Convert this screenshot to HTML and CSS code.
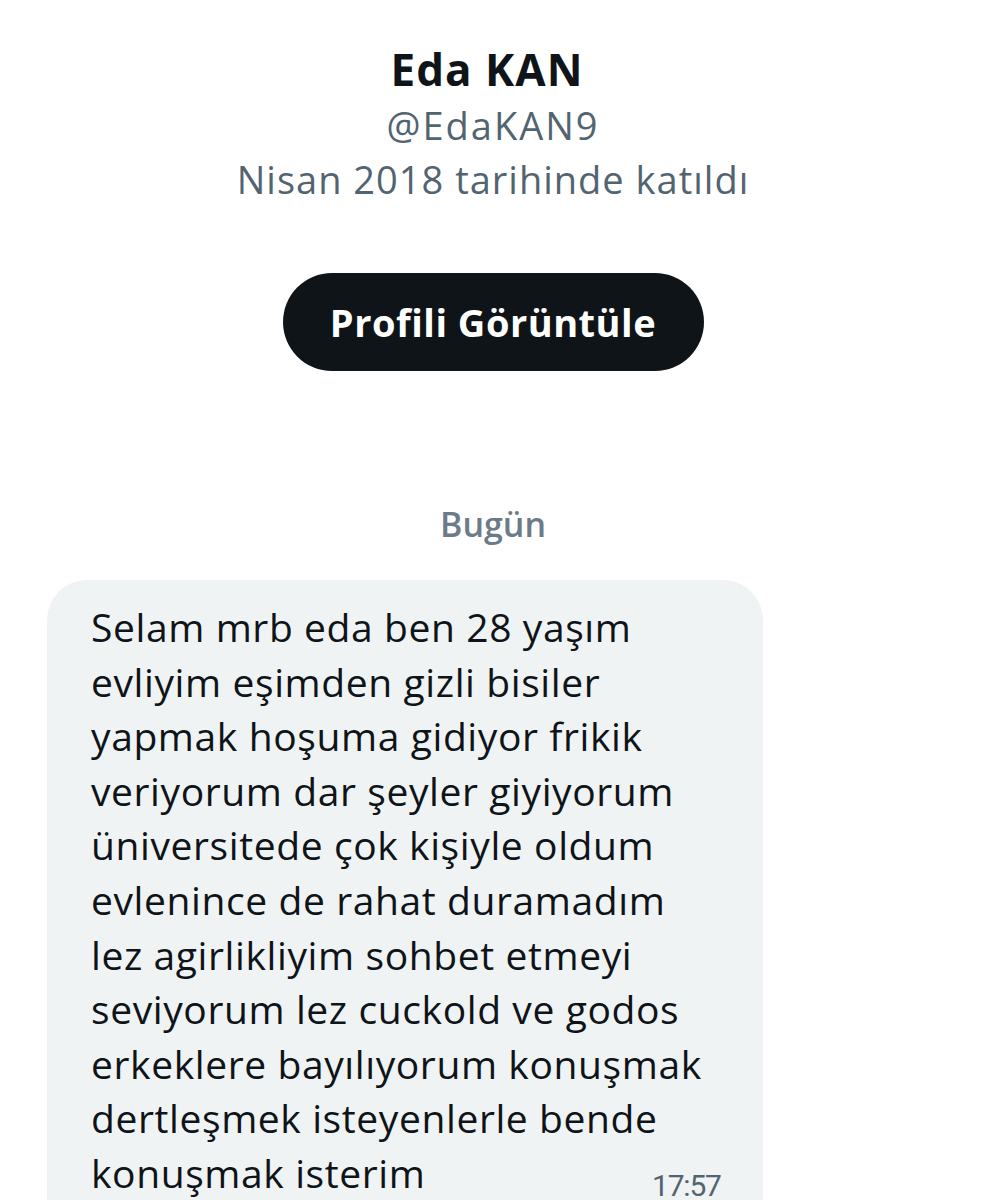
FILE: index.html
```html
<!DOCTYPE html>
<html lang="tr">
<head>
<meta charset="utf-8">
<link rel="stylesheet" href="styles.css">
</head>
<body>
<main class="page">
  <section class="profile">
    <h1 class="name">Eda KAN</h1>
    <div class="handle">@EdaKAN9</div>
    <div class="joined">Nisan 2018 tarihinde katıldı</div>
    <button class="view-btn">Profili Görüntüle</button>
  </section>
  <div class="day">Bugün</div>
  <div class="bubble">
    <p class="msg">Selam mrb eda ben 28 yaşım<br>evliyim eşimden gizli bisiler<br>yapmak hoşuma gidiyor frikik<br>veriyorum dar şeyler giyiyorum<br>üniversitede çok kişiyle oldum<br>evlenince de rahat duramadım<br>lez agirlikliyim sohbet etmeyi<br>seviyorum lez cuckold ve godos<br>erkeklere bayılıyorum konuşmak<br>dertleşmek isteyenlerle bende<br>konuşmak isterim</p>
    <span class="time">17:57</span>
  </div>
</main>
</body>
</html>
```
FILE: styles.css
```css
html, body {
  margin: 0;
  padding: 0;
  background: #ffffff;
}
.page {
  width: 986px;
  height: 1200px;
  overflow: hidden;
  font-family: "Open Sans", "Liberation Sans", sans-serif;
}
.profile {
  display: flex;
  flex-direction: column;
  align-items: center;
  padding-top: 40px;
}
.name {
  margin: 0 12px 0 0;
  font-size: 44px;
  line-height: 58px;
  font-weight: 700;
  letter-spacing: 1px;
  color: #0f1419;
}
.handle {
  font-size: 38px;
  line-height: 54px;
  letter-spacing: 2px;
  color: #536471;
}
.joined {
  font-size: 38px;
  line-height: 54px;
  letter-spacing: 1px;
  color: #536471;
}
.view-btn {
  margin-top: 67px;
  width: 421px;
  height: 98px;
  padding: 0;
  border: none;
  border-radius: 49px;
  background: #0f1419;
  color: #ffffff;
  font-family: "Open Sans", "Liberation Sans", sans-serif;
  font-size: 38px;
  font-weight: 700;
  letter-spacing: 0.5px;
}
.day {
  margin-top: 131px;
  text-align: center;
  font-weight: 600;
  font-size: 34px;
  line-height: 44px;
  color: #6b7b88;
}
.bubble {
  margin: 34px 0 0 47px;
  width: 716px;
  height: 700px;
  background: #eff3f4;
  border-radius: 40px;
  box-sizing: border-box;
  padding: 20px 44px;
  position: relative;
}
.msg {
  margin: 0;
  font-size: 39px;
  line-height: 54.6px;
  letter-spacing: 0.6px;
  color: #0f1419;
}
.time {
  position: absolute;
  left: 605px;
  top: 596px;
  font-family: Roboto, sans-serif;
  font-size: 30px;
  line-height: 20px;
  letter-spacing: -1.2px;
  color: #536471;
}
```
